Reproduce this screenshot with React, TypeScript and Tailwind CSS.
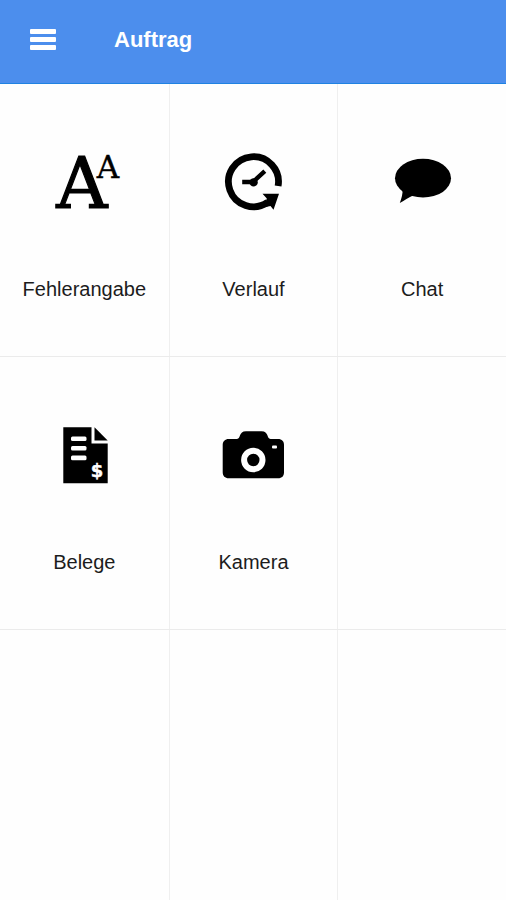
import type { ReactNode } from "react";

interface Tile {
  label: string;
  icon: ReactNode;
}

const iconClass = "h-16 w-[72px] shrink-0 overflow-visible";

function FontIcon() {
  return (
    <svg viewBox="0 0 72 64" className={`${iconClass} font-['DejaVu_Serif',serif]`} stroke="black" aria-hidden="true">
      <text x="34" y="57.5" fontSize="71" strokeWidth="1.2" textAnchor="middle">A</text>
      <text x="60" y="27.5" fontSize="31" strokeWidth="0.4" textAnchor="middle">A</text>
    </svg>
  );
}

function HistoryIcon() {
  return (
    <svg viewBox="1 0 72 64" className={iconClass} aria-hidden="true">
      <path d="M62.1 36A25 25 0 1 0 51.5 52.4" fill="none" stroke="black" strokeWidth="6.8" />
      <path d="M46.5 43.8H63L57.5 59.8L54.5 56L47.5 57.4L50.8 48.5Z" />
      <path d="M26.2 32H37L48.8 21.2" fill="none" stroke="black" strokeWidth="4.4" />
      <circle cx="37.6" cy="32.4" r="4.2" />
    </svg>
  );
}

function ChatIcon() {
  return (
    <svg viewBox="0 0 72 64" className={iconClass} aria-hidden="true">
      <ellipse cx="37" cy="28.2" rx="28" ry="19.4" />
      <path d="M16.5 39C17 44 15.5 48 13.8 53C19 50.5 22 47.5 27 45.5Z" />
    </svg>
  );
}

function ReceiptIcon() {
  return (
    <svg viewBox="0 0 72 64" className={`${iconClass} font-['DejaVu_Sans',sans-serif]`} aria-hidden="true">
      <path d="M15.3 4.3H43.5V20.5H59.7V60.2H15.3Z" />
      <path d="M46.5 4.3L59.7 17.6H46.5Z" />
      <g fill="white">
        <rect x="23" y="13.5" width="15.5" height="4.6" rx="1.5" />
        <rect x="23" y="23" width="15.5" height="4.6" rx="1.5" />
        <rect x="23" y="32.6" width="15.5" height="4.6" rx="1.5" />
        <text x="49" y="54" fontSize="18" fontWeight="bold" stroke="white" strokeWidth="0.4" textAnchor="middle">$</text>
      </g>
    </svg>
  );
}

function CameraIcon() {
  return (
    <svg viewBox="1 0 72 64" className={iconClass} aria-hidden="true">
      <path d="M12.7 16H21C25 16 22.5 8.3 30 8.3H45.5C53 8.3 50.5 16 54.5 16H62C66 16 68 18.5 68 22V49.3C68 53 66 55.3 62 55.3H12.7C9 55.3 6.7 53 6.7 49.3V22C6.7 18.5 9 16 12.7 16Z" />
      <circle cx="37.3" cy="37" r="9.2" fill="none" stroke="white" strokeWidth="6" />
      <rect x="56" y="22.5" width="5" height="3" rx="1" fill="white" />
    </svg>
  );
}

const rows: (Tile | null)[][] = [
  [
    { label: "Fehlerangabe", icon: <FontIcon /> },
    { label: "Verlauf", icon: <HistoryIcon /> },
    { label: "Chat", icon: <ChatIcon /> },
  ],
  [
    { label: "Belege", icon: <ReceiptIcon /> },
    { label: "Kamera", icon: <CameraIcon /> },
    null,
  ],
];

const cellClass = "border-l border-[#efefef] first:border-l-0";

function TileButton({ tile }: { tile: Tile }) {
  return (
    <button type="button" className="flex h-full w-full flex-col items-center gap-[61px] pt-[66px]">
      {tile.icon}
      <span className="text-[20px] leading-7 text-[#1c1c1c]">{tile.label}</span>
    </button>
  );
}

export default function App() {
  return (
    <div className="flex min-h-screen flex-col bg-[#fefefe] font-['Liberation_Sans',Arial,sans-serif]">
      <header className="flex h-[84px] items-center gap-[58px] border-b border-[#1f82e2] bg-[#4c8eed] px-[30px] pb-1">
        <button type="button" aria-label="Menü" className="flex w-[26px] flex-col gap-[3px]">
          <span className="h-[5px] w-full rounded-[1px] bg-white" />
          <span className="h-[5px] w-full rounded-[1px] bg-white" />
          <span className="h-[5px] w-full rounded-[1px] bg-white" />
        </button>
        <h1 className="text-[22px] font-bold leading-7 text-white">Auftrag</h1>
      </header>

      <main className="flex flex-1 flex-col">
        {rows.map((row, i) => (
          <div key={i} className="grid h-[273px] grid-cols-3 border-b border-[#ebebeb]">
            {row.map((tile, j) => (
              <div key={j} className={cellClass}>
                {tile && <TileButton tile={tile} />}
              </div>
            ))}
          </div>
        ))}
        <div className="grid flex-1 grid-cols-3">
          <div className={cellClass} />
          <div className={cellClass} />
          <div className={cellClass} />
        </div>
      </main>
    </div>
  );
}
